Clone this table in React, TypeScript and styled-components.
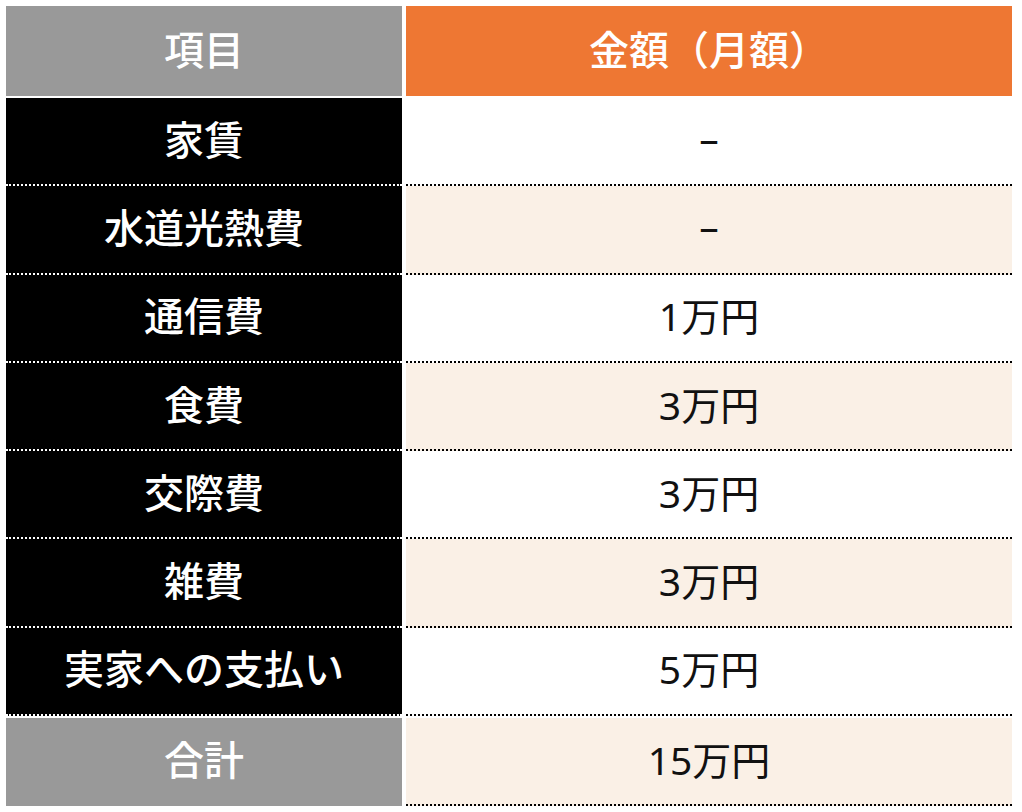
import React from "react";
import styled, { createGlobalStyle } from "styled-components";

const GlobalStyle = createGlobalStyle`
  body {
    margin: 0;
    background: #ffffff;
    font-family: "Noto Sans", "Noto Sans CJK JP", sans-serif;
  }
`;

const Table = styled.div`
  margin: 6px;
  width: 1006px;
  display: flex;
  flex-direction: column;
`;

const Row = styled.div<{ $gapTop?: boolean }>`
  display: grid;
  grid-template-columns: 396px 606px;
  column-gap: 4px;
  margin-top: ${(p) => (p.$gapTop ? "2px" : "0")};
`;

type Kind = "headLabel" | "headValue" | "label" | "value" | "totalLabel";

const bg: Record<Kind, string> = {
  headLabel: "#999999",
  headValue: "#ee7733",
  label: "#000000",
  value: "#ffffff",
  totalLabel: "#999999",
};

const Cell = styled.div<{ $kind: Kind; $tint?: boolean }>`
  display: flex;
  align-items: center;
  justify-content: center;
  box-sizing: border-box;
  padding-bottom: 7px;
  height: ${(p) => (p.$kind === "headLabel" || p.$kind === "headValue" ? "90px" : "88.3px")};
  background: ${(p) => (p.$tint ? "#faf0e6" : bg[p.$kind])};
  color: ${(p) => (p.$kind === "value" ? "#111111" : "#ffffff")};
  font-size: ${(p) => (p.$kind === "value" ? "39px" : "40px")};
  font-weight: ${(p) => (p.$kind === "value" ? 400 : 500)};
  border-bottom: ${(p) =>
    p.$kind === "label"
      ? "2px dotted #ffffff"
      : p.$kind === "value"
      ? "2px dotted #000000"
      : p.$kind === "totalLabel"
      ? "2px solid #999999"
      : "none"};
  white-space: nowrap;
`;

const rows = [
  { label: "家賃", value: "–" },
  { label: "水道光熱費", value: "–" },
  { label: "通信費", value: "1万円" },
  { label: "食費", value: "3万円" },
  { label: "交際費", value: "3万円" },
  { label: "雑費", value: "3万円" },
  { label: "実家への支払い", value: "5万円" },
];

export default function App() {
  return (
    <>
      <GlobalStyle />
      <Table>
        <Row>
          <Cell $kind="headLabel">項目</Cell>
          <Cell $kind="headValue">金額（月額）</Cell>
        </Row>
        {rows.map((r, i) => (
          <Row key={r.label} $gapTop={i === 0}>
            <Cell $kind="label">{r.label}</Cell>
            <Cell $kind="value" $tint={i % 2 === 1}>
              {r.value}
            </Cell>
          </Row>
        ))}
        <Row $gapTop>
          <Cell $kind="totalLabel">合計</Cell>
          <Cell $kind="value" $tint>
            15万円
          </Cell>
        </Row>
      </Table>
    </>
  );
}
